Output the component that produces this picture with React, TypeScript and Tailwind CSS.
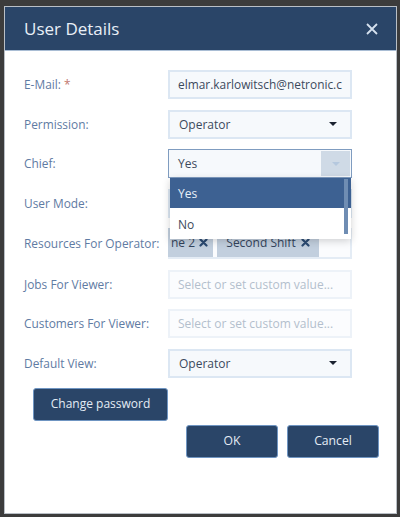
import React from "react";

const font = { fontFamily: '"Open Sans", "Noto Sans", sans-serif' };

function Caret({ className = "border-t-[#1f2937]" }: { className?: string }) {
  return <span className={`block w-0 h-0 border-x-[4px] border-x-transparent border-t-[4px] ${className}`} />;
}

function Row({ label, required, children, h = "h-[29px]" }: { label: string; required?: boolean; children: React.ReactNode; h?: string }) {
  return (
    <div className={`flex items-center ${h}`}>
      <div className="w-[144px] shrink-0 pt-[1px] text-[11.9px] leading-none text-[#5f7ba3] whitespace-nowrap">
        {label} {required && <span className="text-[#c0786f]">*</span>}
      </div>
      {children}
    </div>
  );
}

function SelectBox({ value }: { value?: string }) {
  return (
    <div className="w-[184px] h-[29px] flex items-center justify-between pl-[9px] pr-[13px] bg-[#f6f9fc] border-2 border-[#dce7f3] text-[12px] text-[#3c4a5c]">
      <span className="pt-[1px]">{value}</span>
      <Caret className="border-t-[#1b2230]" />
    </div>
  );
}

function Placeholder() {
  return (
    <div className="w-[184px] h-[29px] flex items-center pl-[8px] pt-[1px] bg-[#fbfcfe] border-2 border-[#edf2f8] text-[12px] text-[#b3bfcd] whitespace-nowrap">
      Select or set custom value...
    </div>
  );
}

function X() {
  return (
    <svg width="9" height="9" viewBox="0 0 9 9" className="shrink-0">
      <path d="M1.5 1.5 L7.5 7.5 M7.5 1.5 L1.5 7.5" stroke="#2a4a72" strokeWidth="2.2" strokeLinecap="round" />
    </svg>
  );
}

export default function App() {
  return (
    <div className="w-[400px] h-[517px] bg-[#3c3c3c] pt-[6px] pl-[4px] pr-[3px] pb-[3px] overflow-hidden" style={font}>
      <div className="w-[393px] h-[508px] bg-white border border-[#b9bfc6] flex flex-col">
        <div className="h-[44px] shrink-0 bg-[#2a4568] border-b border-[#a9bdd4] flex items-center justify-between pl-[19px] pr-[18px]">
          <span className="text-[17px] text-[#e8eff7] leading-none">User Details</span>
          <svg width="12" height="12" viewBox="0 0 12 12">
            <path d="M1 1 L11 11 M11 1 L1 11" stroke="#d5e1ee" strokeWidth="1.8" />
          </svg>
        </div>
        <div className="flex flex-col pl-[19px] pt-[19px] gap-[10.5px] relative">
          <Row label="E-Mail:" required>
            <div className="w-[184px] h-[29px] flex items-center pl-[8px] pt-[1px] bg-[#f6f9fc] border-2 border-[#dce7f3] text-[11.9px] text-[#3c4a5c] overflow-hidden whitespace-nowrap">
              elmar.karlowitsch@netronic.c
            </div>
          </Row>
          <Row label="Permission:">
            <SelectBox value="Operator" />
          </Row>
          <Row label="Chief:">
            <div className="relative w-[184px] h-[29px] flex items-center justify-between pl-[9px] pr-[1px] bg-[#f6f9fc] border border-[#7f9cc0] text-[12px] text-[#3c4a5c]">
              <span className="pt-[1px]">Yes</span>
              <span className="w-[29px] h-[25px] bg-[#cfdae6] flex items-center justify-center">
                <Caret className="border-t-[#b5c8de]" />
              </span>
              <div className="absolute left-[1px] top-[28px] w-[181px] h-[61px] z-10 bg-white shadow-[0_2px_8px_rgba(0,0,0,0.18)]">
                <div className="h-[30px] bg-[#3d6192] text-[#e9f0f8] flex items-center pl-[8px] pt-[2px] text-[12px]">Yes</div>
                <div className="h-[30px] flex items-center pl-[8px] pt-[3px] text-[12px] text-[#3c4a5c]">No</div>
                <div className="absolute right-[3px] top-[1px] w-[4px] h-[55px] bg-[#6f8db3]" />
              </div>
            </div>
          </Row>
          <Row label="User Mode:">
            <SelectBox />
          </Row>
          <Row label="Resources For Operator:" h="h-[31px]">
            <div className="w-[184px] h-[31px] flex items-stretch bg-[#fbfcfe] border-2 border-t-0 border-l-0 border-[#e4ecf5] overflow-hidden whitespace-nowrap text-[12px] text-[#33445c]">
              <span className="w-[45px] shrink-0 flex items-center justify-end gap-[4px] pr-[5px] bg-[#c2cfde] overflow-hidden">
                <span className="shrink-0">ne 2</span>
                <X />
              </span>
              <span className="ml-[4px] w-[102px] shrink-0 flex items-center justify-center gap-[5px] bg-[#c2cfde]">
                <span>Second Shift</span>
                <X />
              </span>
            </div>
          </Row>
          <Row label="Jobs For Viewer:">
            <Placeholder />
          </Row>
          <Row label="Customers For Viewer:">
            <Placeholder />
          </Row>
          <Row label="Default View:">
            <SelectBox value="Operator" />
          </Row>
        </div>
        <div className="pl-[28px] mt-[10px]">
          <button className="w-[135px] h-[33px] bg-[#2a4568] border border-[#6f95c2] rounded-[3px] text-[12px] text-[#e4ecf5]">
            Change password
          </button>
        </div>
        <div className="flex justify-end gap-[9px] pr-[17px] mt-[4px]">
          <button className="w-[92px] h-[33px] bg-[#2a4568] border border-[#6f95c2] rounded-[3px] text-[12.2px] text-[#e4ecf5]">
            OK
          </button>
          <button className="w-[92px] h-[33px] bg-[#2a4568] border border-[#6f95c2] rounded-[3px] text-[12.2px] text-[#e4ecf5]">
            Cancel
          </button>
        </div>
      </div>
    </div>
  );
}
